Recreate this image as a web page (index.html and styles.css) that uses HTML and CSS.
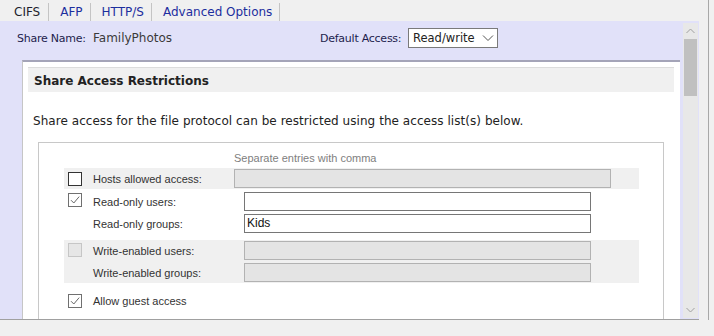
FILE: index.html
```html
<!DOCTYPE html>
<html>
<head>
<meta charset="utf-8">
<link rel="stylesheet" href="styles.css">
</head>
<body>
<div class="frame">
  <div class="tabs">
    <div class="tab active">CIFS</div>
    <div class="tab">AFP</div>
    <div class="tab">HTTP/S</div>
    <div class="tab">Advanced Options</div>
  </div>
  <div class="panel">
    <div class="content">
      <div class="share-row">
        <span class="lbl lbl-name">Share Name:</span>
        <span class="val">FamilyPhotos</span>
        <span class="lbl lbl-da">Default Access:</span>
        <div class="select"><span>Read/write</span>
          <svg class="chev" width="12" height="8" viewBox="0 0 12 8"><path d="M1 1.5 L6 6.5 L11 1.5" fill="none" stroke="#555" stroke-width="1"/></svg>
        </div>
      </div>
      <div class="box">
        <div class="section-head">Share Access Restrictions</div>
        <p class="desc">Share access for the file protocol can be restricted using the access list(s) below.</p>
        <div class="fieldset">
          <div class="hint">Separate entries with comma</div>
          <div class="row shaded r1">
            <div class="cbcell"><span class="cb"></span></div>
            <div class="lines">
              <div class="line"><span class="flbl w141">Hosts allowed access:</span><span class="inp dis wide"></span></div>
            </div>
          </div>
          <div class="row r2">
            <div class="cbcell"><span class="cb checked"><svg width="12" height="12" viewBox="0 0 12 12"><path d="M2 6.2 L4.8 9 L10.2 2.6" fill="none" stroke="#666" stroke-width="1"/></svg></span></div>
            <div class="lines">
              <div class="line"><span class="flbl w151">Read-only users:</span><span class="inp"></span></div>
              <div class="line"><span class="flbl w151">Read-only groups:</span><span class="inp">Kids</span></div>
            </div>
          </div>
          <div class="row shaded r3">
            <div class="cbcell"><span class="cb disabled"></span></div>
            <div class="lines">
              <div class="line"><span class="flbl w151">Write-enabled users:</span><span class="inp dis"></span></div>
              <div class="line"><span class="flbl w151">Write-enabled groups:</span><span class="inp dis"></span></div>
            </div>
          </div>
          <div class="row r4">
            <div class="cbcell"><span class="cb checked"><svg width="12" height="12" viewBox="0 0 12 12"><path d="M2 6.2 L4.8 9 L10.2 2.6" fill="none" stroke="#666" stroke-width="1"/></svg></span></div>
            <div class="lines">
              <div class="line"><span class="flbl">Allow guest access</span></div>
            </div>
          </div>
        </div>
      </div>
    </div>
    <div class="scrollbar">
      <div class="arrow"><svg width="9" height="6" viewBox="0 0 9 6"><path d="M0.5 5 L4.5 1 L8.5 5" fill="none" stroke="#a0a0a0" stroke-width="1"/></svg></div>
      <div class="thumb"></div>
      <div class="track"></div>
      <div class="arrow"><svg width="9" height="6" viewBox="0 0 9 6"><path d="M0.5 1 L4.5 5 L8.5 1" fill="none" stroke="#a0a0a0" stroke-width="1"/></svg></div>
    </div>
  </div>
</div>
</body>
</html>
```
FILE: styles.css
```css
html, body {
  margin: 0;
  padding: 0;
}
body {
  background: #f0f0f0;
  width: 714px;
  height: 336px;
  overflow: hidden;
  font-family: "DejaVu Sans", Verdana, sans-serif;
}
.frame {
  width: 708px;
  height: 320px;
  border-right: 1px solid #a8a8a8;
}
.tabs {
  height: 21px;
  display: flex;
  padding-left: 3px;
  align-items: flex-end;
}
.tab {
  height: 18px;
  padding: 0 7px 0 11px;
  border-right: 1px solid #c4c4c4;
  font-size: 12px;
  line-height: 19px;
  color: #1c2e9e;
  white-space: nowrap;
}
.tab.active {
  color: #1e1e2e;
  padding-right: 8px;
}
.panel {
  width: 699px;
  height: 298px;
  background: #e1e1f9;
  border-bottom: 1px solid #a0a0a0;
  display: flex;
}
.content {
  flex: 1;
  overflow: hidden;
}
.share-row {
  height: 39px;
  display: flex;
  align-items: center;
  padding-left: 17px;
  box-sizing: border-box;
  padding-bottom: 5px;
  font-size: 11px;
  white-space: nowrap;
}
.lbl {
  color: #1d1d4d;
  letter-spacing: -0.25px;
}
.lbl-name { width: 76px; flex: none; }
.val { width: 227px; flex: none; color: #3a3a3a; font-size: 12px; }
.lbl-da { width: 88px; flex: none; }
.select {
  width: 90px;
  flex: none;
  height: 20px;
  box-sizing: border-box;
  border: 1px solid #7a7a7a;
  background: #fff;
  display: flex;
  align-items: center;
  justify-content: space-between;
  padding: 0 3px 0 4px;
  font-size: 11.5px;
  color: #222;
}
.chev { display: block; }
.box {
  margin-left: 22px;
  margin-right: 3px;
  height: 400px;
  background: #fff;
  border-top: 2px solid #a4a4b8;
  border-left: 1px solid #c6c6c6;
  padding: 5px 0 0 5px;
}
.section-head {
  margin-right: 6px;
  height: 24px;
  background: #f0f0f0;
  border-top: 1px solid #dcdcdc;
  font-weight: bold;
  font-size: 12px;
  line-height: 26px;
  padding-left: 6px;
  color: #222;
}
.desc {
  margin: 21px 0 0 5px;
  font-size: 12px;
  line-height: 16px;
  color: #222;
  white-space: nowrap;
  letter-spacing: 0.05px;
}
.fieldset {
  margin: 13px 16px 0 10px;
  border: 1px solid #c8c8c8;
  height: 300px;
  padding: 9px 24px 0 25px;
  font-family: "Liberation Sans", Arial, sans-serif;
  font-size: 11px;
  color: #333;
  white-space: nowrap;
}
.hint {
  padding-left: 170px;
  line-height: 13px;
  height: 16px;
  color: #808080;
}
.row {
  display: flex;
}
.shaded { background: #f0f0f0; }
.cbcell {
  width: 29px;
  flex: none;
}
.cb {
  display: block;
  width: 14px;
  height: 14px;
  box-sizing: border-box;
  border: 1px solid #333;
  background: #fff;
  margin-left: 4px;
}
.cb.checked {
  border-color: #707070;
}
.cb.checked svg { display: block; margin: 0; }
.cb.disabled {
  border-color: #c6c6c6;
  background: #e6e6e6;
}
.lines {
  display: flex;
  flex-direction: column;
  gap: 3px;
}
.line {
  display: flex;
  align-items: center;
}
.flbl { flex: none; }
.w141 { width: 141px; }
.w151 { width: 151px; }
.inp {
  display: block;
  width: 347px;
  height: 19px;
  box-sizing: border-box;
  border: 1px solid #767676;
  background: #fff;
  font-size: 12px;
  line-height: 17px;
  padding-left: 2px;
  color: #111;
}
.inp.dis {
  background: #e4e4e4;
  border-color: #b2b2b2;
}
.inp.wide { width: 377px; }
.r1 { height: 21px; }
.r1 .cbcell { padding-top: 4px; }
.r1 .lines { padding-top: 1px; }
.r2 { padding: 3px 0 7px; }
.r2 .cbcell { padding-top: 1px; }
.r3 { padding: 1px 0 1px; }
.r3 .cbcell { padding-top: 2px; }
.r4 { padding-top: 11px; }
.r4 .line { height: 14px; }
.scrollbar {
  width: 15px;
  margin: 2px 1px 1px 0;
  background: #e8e8e8;
  display: flex;
  flex-direction: column;
}
.arrow {
  height: 16px;
  display: flex;
  align-items: center;
  justify-content: center;
}
.arrow svg { display: block; }
.thumb {
  height: 57px;
  margin: 0 1px;
  background: #c0c0c0;
}
.track { flex: 1; }
```
